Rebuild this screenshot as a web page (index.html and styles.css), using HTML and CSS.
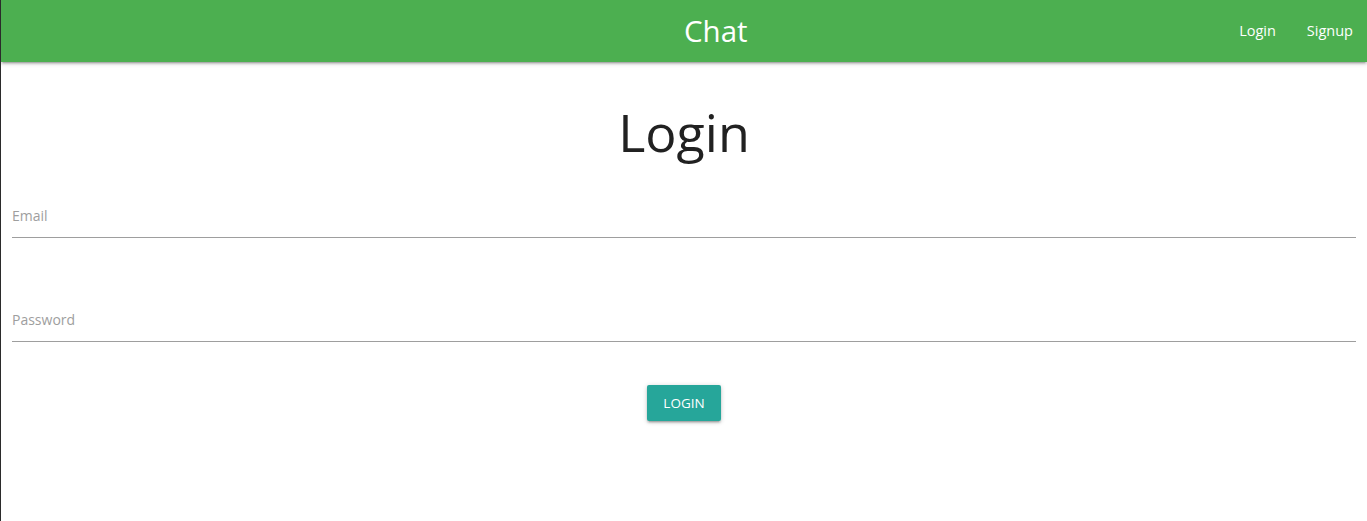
FILE: index.html
```html
<!DOCTYPE html>
<html lang="en">
<head>
<meta charset="utf-8">
<title>Chat</title>
<link rel="stylesheet" href="styles.css">
</head>
<body>
<nav class="navbar">
  <div class="brand-spacer"></div>
  <a class="brand" href="#">Chat</a>
  <ul class="nav-links">
    <li><a href="#">Login</a></li>
    <li><a href="#">Signup</a></li>
  </ul>
</nav>
<main class="page">
  <h1 class="title">Login</h1>
  <form class="form">
    <div class="field">
      <label class="field-label">Email</label>
    </div>
    <div class="field">
      <label class="field-label">Password</label>
    </div>
    <div class="actions">
      <button type="button" class="btn">LOGIN</button>
    </div>
  </form>
</main>
</body>
</html>
```
FILE: styles.css
```css
html, body {
  margin: 0;
  padding: 0;
  height: 100%;
}
body {
  font-family: "Open Sans", "Noto Sans", sans-serif;
  background: #fff;
  border-left: 1px solid #2b2b2b;
  box-sizing: border-box;
  color: #212121;
}
.navbar {
  height: 62px;
  background: #4caf50;
  display: flex;
  align-items: center;
  box-shadow: 0 2px 2px 0 rgba(0,0,0,0.14), 0 3px 1px -2px rgba(0,0,0,0.12), 0 1px 5px 0 rgba(0,0,0,0.2);
  position: relative;
  z-index: 1;
}
.brand-spacer {
  width: 683px;
  flex: none;
}
.brand {
  color: #fff;
  text-decoration: none;
  font-size: 29.5px;
  line-height: 62px;
  flex: none;
}
.nav-links {
  list-style: none;
  margin: 0 0 0 auto;
  padding: 0;
  display: flex;
  gap: 31px;
  padding-right: 14px;
}
.nav-links a {
  color: #fff;
  text-decoration: none;
  font-size: 14.5px;
  line-height: 62px;
}
.page {
  padding: 0 11px 0 11px;
}
.title {
  margin: 0;
  padding-top: 36px;
  font-weight: 400;
  font-size: 52px;
  line-height: 68px;
  text-align: center;
  color: #212121;
}
.form {
  margin-top: 12px;
}
.field {
  height: 60px;
  border-bottom: 1px solid #9e9e9e;
  box-sizing: border-box;
  margin-bottom: 44px;
  display: flex;
  align-items: flex-end;
}
.field + .field {
  margin-bottom: 43px;
}
.field-label {
  color: #9e9e9e;
  font-size: 14px;
  line-height: 20px;
  padding-bottom: 11px;
}
.actions {
  display: flex;
  justify-content: center;
}
.btn {
  height: 36px;
  padding: 0 16px;
  background: #26a69a;
  color: #fff;
  border: none;
  border-radius: 2px;
  font-family: inherit;
  font-size: 13.5px;
  box-shadow: 0 2px 2px 0 rgba(0,0,0,0.14), 0 3px 1px -2px rgba(0,0,0,0.12), 0 1px 5px 0 rgba(0,0,0,0.2);
}
```
